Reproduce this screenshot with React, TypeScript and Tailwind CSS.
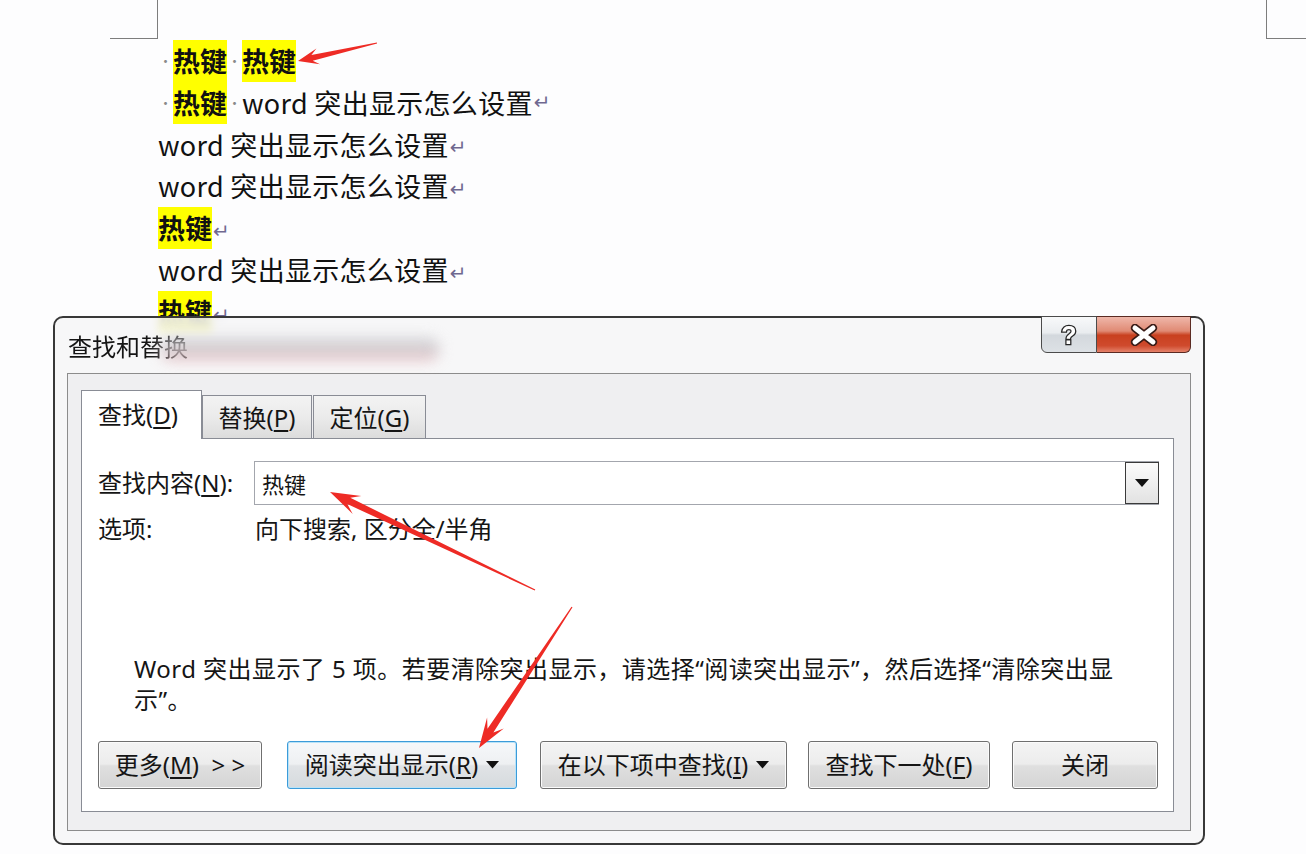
import React from "react";

type Pt = [number, number];

// tapered red annotation arrow, tail thin -> head thick
const arrowPoints = (tail: Pt, tip: Pt, head: number, barb: number, shaft: number) => {
  const dx = tip[0] - tail[0];
  const dy = tip[1] - tail[1];
  const len = Math.hypot(dx, dy);
  const ux = dx / len;
  const uy = dy / len;
  const nx = -uy;
  const ny = ux;
  const p = (d: number, o: number) =>
    `${(tip[0] - ux * d + nx * o).toFixed(1)},${(tip[1] - uy * d + ny * o).toFixed(1)}`;
  return [
    p(len, 0.6),
    p(head * 0.8, shaft),
    p(head * 1.15, barb),
    p(0, 0),
    p(head * 1.15, -barb),
    p(head * 0.8, -shaft),
    p(len, -0.6),
  ].join(" ");
};

const Hl = ({ children }: { children: React.ReactNode }) => (
  <span className="inline-block bg-[#ffff00] font-semibold leading-[41.8px]">{children}</span>
);

const Dot = () => (
  <span className="inline-block w-[15px] text-center text-[14px] text-[#8a8a8a] align-middle">·</span>
);

const Para = () => (
  <span className="ml-[1px] text-[20px] text-[#6f6890] align-middle font-['DejaVu_Sans',sans-serif]">↵</span>
);

const Caret = () => (
  <svg width="13" height="8" viewBox="0 0 13 8" className="ml-[8px]">
    <polygon points="0,0 13,0 6.5,7.5" fill="#111" />
  </svg>
);

const U = ({ children }: { children: React.ReactNode }) => (
  <span className="underline underline-offset-[3px] decoration-[1.5px]">{children}</span>
);

const Btn = ({
  children,
  className,
  focused,
}: {
  children: React.ReactNode;
  className: string;
  focused?: boolean;
}) => (
  <div
    className={
      "h-[48px] flex items-center justify-center rounded-[3px] border text-[24px] leading-none text-[#151515] " +
      (focused
        ? "border-[#3c9bd9] shadow-[inset_0_0_0_1px_#b9e3f8] bg-[linear-gradient(to_bottom,#f6f8fa_0%,#eef0f2_48%,#e0e3e6_52%,#d6dadd_100%)] "
        : "border-[#6f6f6f] shadow-[inset_0_0_0_1px_#fbfbfb] bg-[linear-gradient(to_bottom,#f4f4f4_0%,#ececec_48%,#dfdfdf_52%,#d4d4d4_100%)] ") +
      className
    }
  >
    {children}
  </div>
);

const DocLines = () => (
  <div className="pl-[158px] pt-[1px] text-[27px] leading-[41.8px] text-[#111] font-['Noto_Sans_CJK_SC',sans-serif]">
    <div className="flex items-center h-[41.8px]">
      <Dot />
      <Hl>热键</Hl>
      <Dot />
      <Hl>热键</Hl>
    </div>
    <div className="flex items-center h-[41.8px]">
      <Dot />
      <Hl>热键</Hl>
      <Dot />
      <span className="tracking-[0.3px]">word 突出显示怎么设置</span>
      <Para />
    </div>
    <div className="h-[41.8px] tracking-[0.3px]">
      word 突出显示怎么设置<Para />
    </div>
    <div className="h-[41.8px] tracking-[0.3px]">
      word 突出显示怎么设置<Para />
    </div>
    <div className="h-[41.8px]">
      <Hl>热键</Hl>
      <Para />
    </div>
    <div className="h-[41.8px] tracking-[0.3px]">
      word 突出显示怎么设置<Para />
    </div>
    <div className="h-[41.8px]">
      <Hl>热键</Hl>
      <Para />
    </div>
  </div>
);

const TitleButtons = () => (
  <div className="flex -mt-[2px] mr-[12px]">
    <div className="w-[56px] h-[37px] flex items-center justify-center border border-[#4b4b4b] rounded-bl-[6px] bg-[linear-gradient(to_bottom,#f8f9fa_0%,#e9ecef_45%,#d3d8dd_52%,#dde1e5_100%)]">
      <svg width="22" height="28" viewBox="0 0 22 28">
        <text
          x="11"
          y="23"
          textAnchor="middle"
          fontSize="25"
          fontWeight="bold"
          fontFamily="Liberation Sans, sans-serif"
          fill="#fff"
          stroke="#262626"
          strokeWidth="2.6"
          paintOrder="stroke"
        >
          ?
        </text>
      </svg>
    </div>
    <div className="w-[94px] h-[37px] flex items-center justify-center border border-l-0 border-[#5a2a22] rounded-br-[6px] bg-[linear-gradient(to_bottom,#efb7aa_0%,#e08a74_40%,#c9401f_52%,#cf4a2d_82%,#e5826a_100%)]">
      <svg width="28" height="22" viewBox="0 0 28 22">
        <path d="M5 4 L23 18 M23 4 L5 18" stroke="#3a1b16" strokeWidth="8.5" strokeLinecap="round" />
        <path d="M5 4 L23 18 M23 4 L5 18" stroke="#fff" strokeWidth="5" strokeLinecap="round" />
      </svg>
    </div>
  </div>
);

const FindDialog = () => (
  <div className="absolute left-[53px] top-[316px] w-[1152px] h-[529px] rounded-[10px] border-2 border-[#383838] bg-[#f6f6f7]/85 backdrop-blur-[4px] flex flex-col text-[#151515] font-['Noto_Sans','Noto_Sans_CJK_SC',sans-serif]">
    <div className="h-[55px] flex items-start justify-between">
      <div className="flex items-start pt-[13px] pl-[13px]">
        <span className="text-[24px] leading-[30px] font-['Noto_Sans_CJK_SC',sans-serif]">查找和替换</span>
        <span className="ml-[-28px] mt-[6px] w-[280px] h-[24px] rounded-full blur-[7px] opacity-80 bg-[linear-gradient(to_bottom,#d2d2d6_0%,#c8c4c8_55%,#f0b6ba_100%)]" />
      </div>
      <TitleButtons />
    </div>

    <div className="mx-[12px] mb-[12px] flex-1 border border-[#8c8c8c] bg-[#efeff1] pt-[16px] pl-[13px] pr-[16px] pb-[18px] flex flex-col">
      <div className="flex items-end h-[48px] text-[24px]">
        <div className="relative z-10 -mb-px w-[121px] h-[49px] bg-white border border-b-0 border-[#898c95] flex items-center pl-[16px]">
          查找(<U>D</U>)
        </div>
        <div className="w-[110px] h-[43px] border border-b-0 border-[#898c95] flex items-center justify-center pt-[2px] bg-[linear-gradient(to_bottom,#f3f3f3_0%,#ebebeb_50%,#dcdcdc_100%)]">
          替换(<U>P</U>)
        </div>
        <div className="ml-px w-[113px] h-[43px] border border-b-0 border-[#898c95] flex items-center justify-center pt-[2px] bg-[linear-gradient(to_bottom,#f3f3f3_0%,#ebebeb_50%,#dcdcdc_100%)]">
          定位(<U>G</U>)
        </div>
      </div>

      <div className="flex-1 bg-white border border-[#898c95] pt-[22px] pl-[16px] pr-[14px] flex flex-col text-[24px]">
        <div className="h-[44px] flex items-center">
          <div className="w-[156px] shrink-0">
            查找内容(<U>N</U>):
          </div>
          <div className="flex-1 h-full border border-[#a3a6ad] bg-white flex items-center">
            <span className="pl-[7px] text-[22px] font-['Noto_Sans_CJK_SC',sans-serif]">热键</span>
            <div className="ml-auto -mr-px w-[34px] h-[42px] border border-[#3a3a3a] flex items-center justify-center bg-[linear-gradient(to_bottom,#fbfbfb_0%,#efefef_50%,#e2e2e2_100%)]">
              <svg width="14" height="8" viewBox="0 0 14 8">
                <polygon points="0,0 14,0 7,8" fill="#111" />
              </svg>
            </div>
          </div>
        </div>

        <div className="mt-[11px] h-[26px] flex items-center">
          <div className="w-[157px] shrink-0">选项:</div>
          <div>向下搜索, 区分全/半角</div>
        </div>

        <div className="mt-[111px] pl-[36px] leading-[31px] tracking-[0.45px]">
          <div className="whitespace-nowrap">
            Word 突出显示了 5 项。若要清除突出显示，请选择“阅读突出显示”，然后选择“清除突出显
          </div>
          <div>示”。</div>
        </div>

        <div className="mt-[26px] flex">
          <Btn className="w-[164px]">
            更多(<U>M</U>)&nbsp;&nbsp;&gt; &gt;
          </Btn>
          <Btn className="ml-[25px] w-[230px]" focused>
            阅读突出显示(<U>R</U>)
            <Caret />
          </Btn>
          <Btn className="ml-[23px] w-[247px]">
            在以下项中查找(<U>I</U>)
            <Caret />
          </Btn>
          <Btn className="ml-[21px] w-[182px]">
            查找下一处(<U>F</U>)
          </Btn>
          <Btn className="ml-[22px] w-[146px]">关闭</Btn>
        </div>
      </div>
    </div>
  </div>
);

const Arrows = () => (
  <svg className="absolute inset-0 pointer-events-none" width="1306" height="854" viewBox="0 0 1306 854">
    <polygon points={arrowPoints([377, 43], [298, 61], 18, 8, 3)} fill="#ee2b25" />
    <polygon points={arrowPoints([535, 590], [330, 492], 26, 10, 3.5)} fill="#ee2b25" />
    <polygon points={arrowPoints([572, 607], [479, 748], 26, 10, 3.5)} fill="#ee2b25" />
  </svg>
);

export default function App() {
  return (
    <div className="relative w-[1306px] h-[854px] overflow-hidden bg-[#fdfdfe]">
      <div className="flex h-[39px]">
        <div className="w-[110px]" />
        <div className="w-[48px] border-r border-b border-[#7d7d7d]" />
        <div className="flex-1" />
        <div className="w-[40px] border-l border-b border-[#7d7d7d]" />
      </div>
      <DocLines />
      <FindDialog />
      <Arrows />
    </div>
  );
}
